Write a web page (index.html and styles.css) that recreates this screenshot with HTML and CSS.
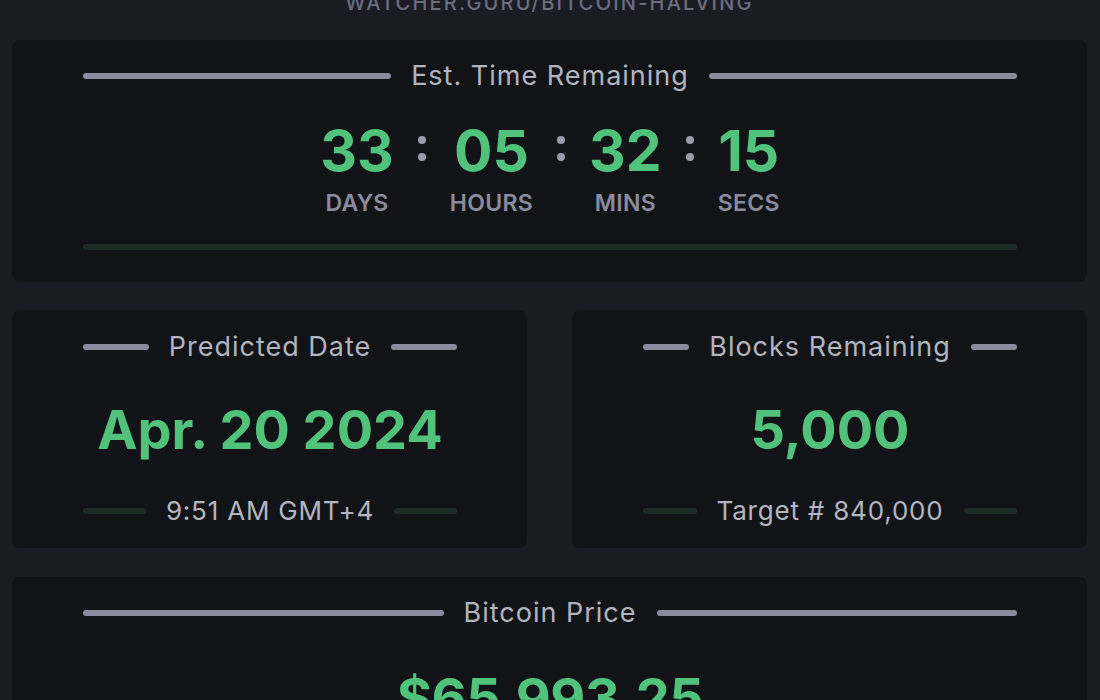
FILE: index.html
```html
<!DOCTYPE html>
<html>
<head>
<meta charset="utf-8">
<link rel="stylesheet" href="styles.css">
</head>
<body>
<div class="page">
  <div class="site">WATCHER.GURU/BITCOIN-HALVING</div>

  <section class="card card-timer">
    <div class="title-row"><span class="bar"></span><span class="title">Est. Time Remaining</span><span class="bar"></span></div>
    <div class="countdown">
      <div class="unit"><div class="num">33</div><div class="lbl">DAYS</div></div>
      <div class="colon"><span></span><span></span></div>
      <div class="unit"><div class="num">05</div><div class="lbl">HOURS</div></div>
      <div class="colon"><span></span><span></span></div>
      <div class="unit"><div class="num">32</div><div class="lbl">MINS</div></div>
      <div class="colon"><span></span><span></span></div>
      <div class="unit"><div class="num">15</div><div class="lbl">SECS</div></div>
    </div>
    <div class="progress"></div>
  </section>

  <div class="grid">
    <section class="card card-small">
      <div class="title-row"><span class="bar"></span><span class="title">Predicted Date</span><span class="bar"></span></div>
      <div class="big">Apr. 20 2024</div>
      <div class="sub-row"><span class="bar dark"></span><span class="sub">9:51 AM GMT+4</span><span class="bar dark"></span></div>
    </section>
    <section class="card card-small">
      <div class="title-row"><span class="bar"></span><span class="title">Blocks Remaining</span><span class="bar"></span></div>
      <div class="big">5,000</div>
      <div class="sub-row"><span class="bar dark"></span><span class="sub">Target # 840,000</span><span class="bar dark"></span></div>
    </section>
  </div>

  <section class="card card-price">
    <div class="title-row"><span class="bar"></span><span class="title">Bitcoin Price</span><span class="bar"></span></div>
    <div class="big price">$65,993.25</div>
  </section>
</div>
</body>
</html>
```

FILE: styles.css
```css
html, body {
  margin: 0;
  padding: 0;
  background: #1a1b23;
  height: 100%;
  overflow: hidden;
}
body {
  font-family: Inter, "Liberation Sans", sans-serif;
  color: #b4b5bf;
}
.page {
  padding: 0 13px 0 12px;
}
.site {
  text-align: center;
  font-size: 20px;
  line-height: 20px;
  letter-spacing: 2.2px;
  color: #6c6e80;
  font-weight: 500;
  height: 47px;
  margin-top: -7px;
}
.card {
  background: #121317;
  border-radius: 8px;
  padding: 20px 70px 0 71px;
}
.title-row, .sub-row {
  display: flex;
  align-items: center;
  gap: 20px;
}
.bar {
  flex: 1;
  height: 6px;
  border-radius: 3px;
  background: #8a8c9e;
}
.bar.dark {
  background: #1d2d26;
}
.title {
  font-size: 27px;
  line-height: 32px;
  color: #b1b3bf;
  letter-spacing: 1px;
}
.card-timer {
  height: 242px;
  box-sizing: border-box;
}
.countdown {
  display: flex;
  justify-content: center;
  gap: 24px;
  margin-top: 30px;
}
.unit {
  display: flex;
  flex-direction: column;
  align-items: center;
}
.num {
  font-size: 57px;
  line-height: 58px;
  font-weight: 700;
  color: #50c27b;
}
.lbl {
  font-size: 23px;
  line-height: 28px;
  font-weight: 600;
  color: #8a8c9e;
  margin-top: 9px;
  letter-spacing: 0.3px;
}
.colon {
  display: flex;
  flex-direction: column;
  gap: 9px;
  padding-top: 14px;
}
.colon span {
  width: 8px;
  height: 8px;
  border-radius: 50%;
  background: #9a9bab;
}
.progress {
  height: 6px;
  border-radius: 3px;
  background: #1d2d26;
  margin-top: 27px;
}
.grid {
  display: grid;
  grid-template-columns: 1fr 1fr;
  gap: 45px;
  margin-top: 28px;
}
.card-small {
  height: 238px;
  box-sizing: border-box;
  padding: 21px 70px 0 71px;
}
.big {
  text-align: center;
  font-size: 54px;
  line-height: 58px;
  font-weight: 700;
  color: #50c27b;
  margin-top: 38px;
}
.sub-row {
  margin-top: 37px;
}
.sub {
  font-size: 26px;
  line-height: 30px;
  color: #b4b5bf;
  letter-spacing: 0.8px;
}
.card-price {
  margin-top: 29px;
  height: 200px;
  box-sizing: border-box;
}
.price {
  margin-top: 40px;
  letter-spacing: -0.5px;
}
```
